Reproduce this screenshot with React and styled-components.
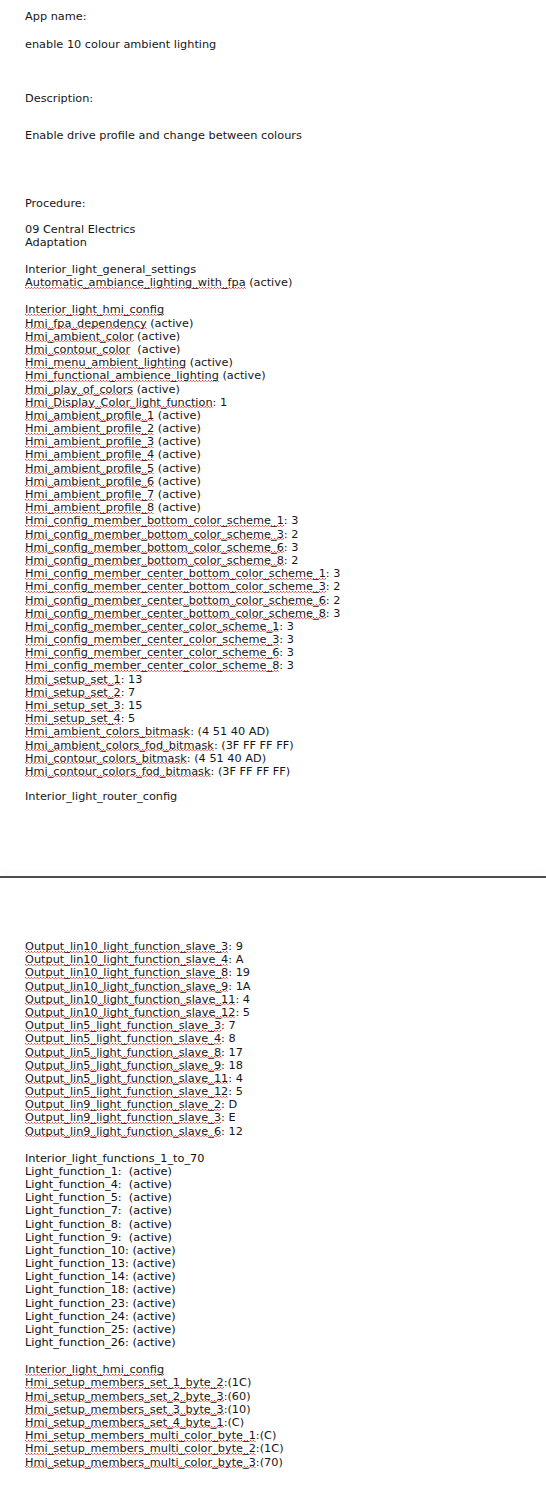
import React from "react";
import styled, { createGlobalStyle } from "styled-components";

const GlobalStyle = createGlobalStyle`
  html, body {
    margin: 0;
    padding: 0;
    background: #ffffff;
  }
  body {
    font-family: "DejaVu Sans", Verdana, sans-serif;
    color: #141414;
  }
`;

const LINE = 13.2;

// page one of the document
const generalLines = [
  { name: "Interior_light_general_settings" },
  { name: "Automatic_ambiance_lighting_with_fpa", rest: " (active)", flag: true },
];

const hmiLines = [
  { name: "Interior_light_hmi_config", flag: true },
  { name: "Hmi_fpa_dependency", rest: " (active)", flag: true },
  { name: "Hmi_ambient_color", rest: " (active)", flag: true },
  { name: "Hmi_contour_color", rest: "  (active)", flag: true },
  { name: "Hmi_menu_ambient_lighting", rest: " (active)", flag: true },
  { name: "Hmi_functional_ambience_lighting", rest: " (active)", flag: true },
  { name: "Hmi_play_of_colors", rest: " (active)", flag: true },
  { name: "Hmi_Display_Color_light_function", rest: ": 1", flag: true },
  { name: "Hmi_ambient_profile_1", rest: " (active)", flag: true },
  { name: "Hmi_ambient_profile_2", rest: " (active)", flag: true },
  { name: "Hmi_ambient_profile_3", rest: " (active)", flag: true },
  { name: "Hmi_ambient_profile_4", rest: " (active)", flag: true },
  { name: "Hmi_ambient_profile_5", rest: " (active)", flag: true },
  { name: "Hmi_ambient_profile_6", rest: " (active)", flag: true },
  { name: "Hmi_ambient_profile_7", rest: " (active)", flag: true },
  { name: "Hmi_ambient_profile_8", rest: " (active)", flag: true },
  { name: "Hmi_config_member_bottom_color_scheme_1", rest: ": 3", flag: true },
  { name: "Hmi_config_member_bottom_color_scheme_3", rest: ": 2", flag: true },
  { name: "Hmi_config_member_bottom_color_scheme_6", rest: ": 3", flag: true },
  { name: "Hmi_config_member_bottom_color_scheme_8", rest: ": 2", flag: true },
  { name: "Hmi_config_member_center_bottom_color_scheme_1", rest: ": 3", flag: true },
  { name: "Hmi_config_member_center_bottom_color_scheme_3", rest: ": 2", flag: true },
  { name: "Hmi_config_member_center_bottom_color_scheme_6", rest: ": 2", flag: true },
  { name: "Hmi_config_member_center_bottom_color_scheme_8", rest: ": 3", flag: true },
  { name: "Hmi_config_member_center_color_scheme_1", rest: ": 3", flag: true },
  { name: "Hmi_config_member_center_color_scheme_3", rest: ": 3", flag: true },
  { name: "Hmi_config_member_center_color_scheme_6", rest: ": 3", flag: true },
  { name: "Hmi_config_member_center_color_scheme_8", rest: ": 3", flag: true },
  { name: "Hmi_setup_set_1", rest: ": 13", flag: true },
  { name: "Hmi_setup_set_2", rest: ": 7", flag: true },
  { name: "Hmi_setup_set_3", rest: ": 15", flag: true },
  { name: "Hmi_setup_set_4", rest: ": 5", flag: true },
  { name: "Hmi_ambient_colors_bitmask", rest: ": (4 51 40 AD)", flag: true },
  { name: "Hmi_ambient_colors_fod_bitmask", rest: ": (3F FF FF FF)", flag: true },
  { name: "Hmi_contour_colors_bitmask", rest: ": (4 51 40 AD)", flag: true },
  { name: "Hmi_contour_colors_fod_bitmask", rest: ": (3F FF FF FF)", flag: true },
];

// page two
const outputLines = [
  ["Output_lin10_light_function_slave_3", ": 9"],
  ["Output_lin10_light_function_slave_4", ": A"],
  ["Output_lin10_light_function_slave_8", ": 19"],
  ["Output_lin10_light_function_slave_9", ": 1A"],
  ["Output_lin10_light_function_slave_11", ": 4"],
  ["Output_lin10_light_function_slave_12", ": 5"],
  ["Output_lin5_light_function_slave_3", ": 7"],
  ["Output_lin5_light_function_slave_4", ": 8"],
  ["Output_lin5_light_function_slave_8", ": 17"],
  ["Output_lin5_light_function_slave_9", ": 18"],
  ["Output_lin5_light_function_slave_11", ": 4"],
  ["Output_lin5_light_function_slave_12", ": 5"],
  ["Output_lin9_light_function_slave_2", ": D"],
  ["Output_lin9_light_function_slave_3", ": E"],
  ["Output_lin9_light_function_slave_6", ": 12"],
].map(([name, rest]) => ({ name, rest, flag: true }));

const functionLines = [
  { name: "Interior_light_functions_1_to_70" },
  ...["1", "4", "5", "7", "8", "9"].map((n) => ({
    name: `Light_function_${n}:  (active)`,
  })),
  ...["10", "13", "14", "18", "23", "24", "25", "26"].map((n) => ({
    name: `Light_function_${n}: (active)`,
  })),
];

const setupLines = [
  { name: "Interior_light_hmi_config", flag: true },
  { name: "Hmi_setup_members_set_1_byte_2", rest: ":(1C)", flag: true },
  { name: "Hmi_setup_members_set_2_byte_3", rest: ":(60)", flag: true },
  { name: "Hmi_setup_members_set_3_byte_3", rest: ":(10)", flag: true },
  { name: "Hmi_setup_members_set_4_byte_1", rest: ":(C)", flag: true },
  { name: "Hmi_setup_members_multi_color_byte_1", rest: ":(C)", flag: true },
  { name: "Hmi_setup_members_multi_color_byte_2", rest: ":(1C)", flag: true },
  { name: "Hmi_setup_members_multi_color_byte_3", rest: ":(70)", flag: true },
];

export default function App() {
  return (
    <>
      <GlobalStyle />
      <Document>
        <Page $height={876} $top={10}>
          <Para>App name:</Para>
          <Para $gap={28}>enable 10 colour ambient lighting</Para>
          <Para $gap={54}>Description:</Para>
          <Para $gap={37}>Enable drive profile and change between colours</Para>
          <Para $gap={68}>Procedure:</Para>
          <Para $gap={26}>
            09 Central Electrics
            <br />
            Adaptation
          </Para>
          <Block lines={generalLines} gap={27} />
          <Block lines={hmiLines} gap={27} />
          <Para $gap={25}>Interior_light_router_config</Para>
        </Page>
        <PageBreak />
        <Page $top={62}>
          <Block lines={outputLines} />
          <Block lines={functionLines} gap={27} dense />
          <Block lines={setupLines} gap={27} />
        </Page>
      </Document>
    </>
  );
}

function Block({ lines, gap, dense }) {
  return (
    <Para $gap={gap} $dense={dense}>
      {lines.map((l, i) => (
        <Line key={i}>
          {l.flag ? <Misspelt>{l.name}</Misspelt> : l.name}
          {l.rest}
        </Line>
      ))}
    </Para>
  );
}

const Document = styled.main`
  width: 546px;
  background: #ffffff;
`;

const Page = styled.section`
  box-sizing: border-box;
  height: ${(p) => (p.$height ? `${p.$height}px` : "auto")};
  padding: ${(p) => p.$top}px 20px 24px 25px;
  font-size: 11.3px;
  line-height: ${LINE}px;
  overflow: hidden;
`;

const Para = styled.div`
  margin-top: ${(p) => (p.$gap ? `${p.$gap - LINE}px` : "0")};
  white-space: pre;
  color: ${(p) => (p.$dense ? "#0d0d0d" : "#161616")};
`;

const Line = styled.div`
  height: ${LINE}px;
`;

// spell-check squiggle: two rows of red dots offset against each other
const Misspelt = styled.span`
  background-image: linear-gradient(90deg, #e2352c 50%, transparent 50%),
    linear-gradient(90deg, transparent 50%, rgba(226, 53, 44, 0.55) 50%);
  background-size: 3px 1px, 3px 1px;
  background-repeat: repeat-x, repeat-x;
  background-position: 0 calc(100% - 1.5px), 0 calc(100% - 0.5px);
`;

const PageBreak = styled.div`
  height: 0;
  border-top: 2px solid #4d4d4d;
  box-shadow: 0 -4px 6px rgba(0, 0, 0, 0.06);
`;
